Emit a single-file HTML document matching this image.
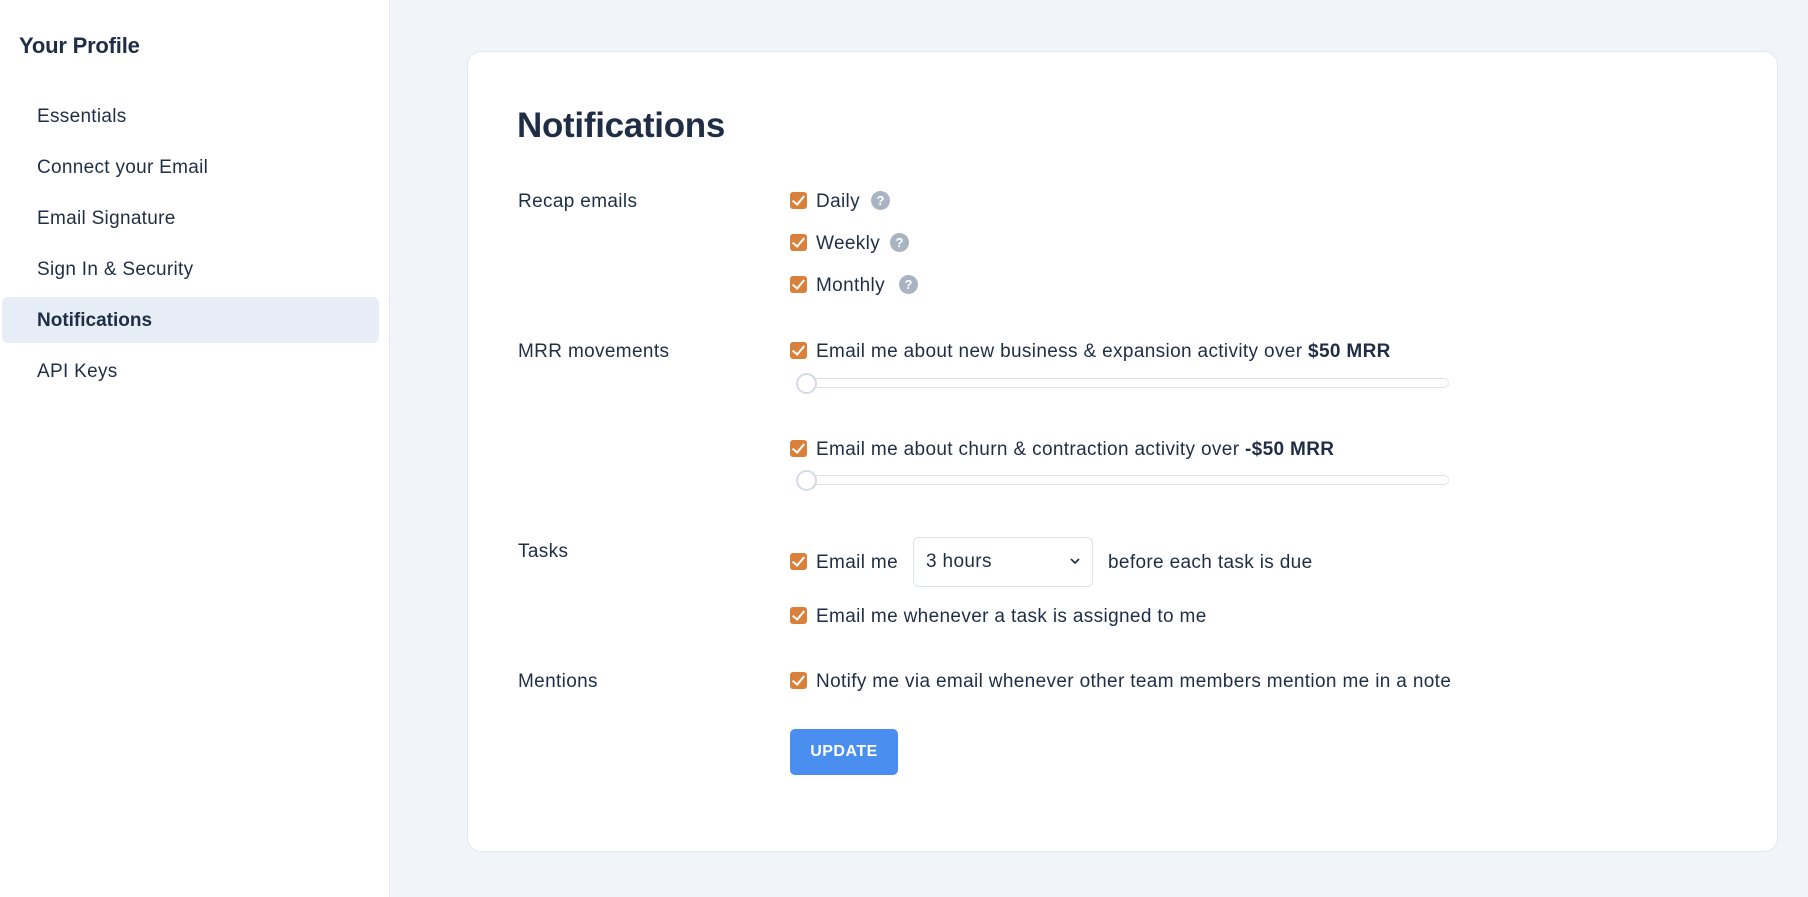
<!DOCTYPE html>
<html><head><meta charset="utf-8"><style>
*{box-sizing:border-box;margin:0;padding:0}
body{width:1808px;height:897px;background:#f1f4f8;font-family:"Liberation Sans",sans-serif;color:#1f2e45;position:relative;overflow:hidden}
.side{position:absolute;left:0;top:0;width:390px;height:897px;background:#fff;border-right:1px solid #e1e7ef}
.abs{position:absolute;white-space:nowrap}
.h{left:19px;top:33px;font-size:22px;font-weight:bold;letter-spacing:-0.2px}
.nav{left:37px;font-size:19px;line-height:22px;letter-spacing:0.3px}
.act{position:absolute;left:2px;top:297px;width:377px;height:46px;background:#e6edf6;border-radius:6px}
.card{position:absolute;left:467px;top:51px;width:1311px;height:801px;background:#fff;border:1px solid #e1e7ef;border-radius:14px}
.t{left:517px;top:106px;font-size:35px;font-weight:bold;letter-spacing:-0.3px}
.lab{left:518px;font-size:19px;line-height:22px;letter-spacing:0.35px}
.cb{position:absolute;left:790px;width:17px;height:17px;background:#d9803a;border-radius:3px}
.cb:after{content:"";position:absolute;left:5px;top:1px;width:5px;height:10px;border:solid #fff;border-width:0 2px 2px 0;transform:rotate(40deg)}
.txt{left:816px;font-size:19px;line-height:22px;letter-spacing:0.35px}
.q{position:absolute;width:19px;height:19px;border-radius:50%;background:#a9b4c2;color:#fff;font-size:13px;font-weight:bold;text-align:center;line-height:19px}
.sl{position:absolute;left:796px;width:653px;height:10px;border:1px solid #dde3ea;border-radius:5px;background:#fff}
.th{position:absolute;left:796px;width:21px;height:21px;border:2px solid #d5dbe4;border-radius:50%;background:#fff}
.sel{position:absolute;left:913px;top:537px;width:180px;height:50px;border:1px solid #dde3ea;border-radius:6px;font-size:19px;letter-spacing:0.35px;padding:13px 0 0 12px}
.btn{position:absolute;left:790px;top:729px;width:108px;height:46px;background:#4a8ff0;border-radius:5px;color:#fff;font-weight:bold;font-size:16px;text-align:center;line-height:46px;letter-spacing:0.5px}
</style></head><body>
<div class="side">
<div class="abs h">Your Profile</div>
<div class="act"></div>
<div class="abs nav" style="top:106px">Essentials</div>
<div class="abs nav" style="top:157px">Connect your Email</div>
<div class="abs nav" style="top:208px">Email Signature</div>
<div class="abs nav" style="top:259px">Sign In &amp; Security</div>
<div class="abs nav" style="top:310px;font-weight:bold;letter-spacing:0">Notifications</div>
<div class="abs nav" style="top:361px">API Keys</div>
</div>
<div class="card"></div>
<div class="abs t">Notifications</div>
<div class="abs lab" style="top:191px">Recap emails</div>
<div class="abs lab" style="top:341px">MRR movements</div>
<div class="abs lab" style="top:541px">Tasks</div>
<div class="abs lab" style="top:671px">Mentions</div>

<div class="cb" style="top:192px"></div><div class="abs txt" style="top:191px">Daily</div><div class="q" style="left:871px;top:191px">?</div>
<div class="cb" style="top:234px"></div><div class="abs txt" style="top:233px">Weekly</div><div class="q" style="left:890px;top:233px">?</div>
<div class="cb" style="top:276px"></div><div class="abs txt" style="top:275px">Monthly</div><div class="q" style="left:899px;top:275px">?</div>

<div class="cb" style="top:342px"></div><div class="abs txt" style="top:341px">Email me about new business &amp; expansion activity over <b>$50 MRR</b></div>
<div class="sl" style="top:378px"></div><div class="th" style="top:373px"></div>
<div class="cb" style="top:440px"></div><div class="abs txt" style="top:439px">Email me about churn &amp; contraction activity over <b>-$50 MRR</b></div>
<div class="sl" style="top:475px"></div><div class="th" style="top:470px"></div>

<div class="cb" style="top:553px"></div><div class="abs txt" style="top:552px">Email me</div>
<div class="sel">3 hours<svg style="position:absolute;right:12px;top:20px" width="10" height="7" viewBox="0 0 10 7"><path d="M1 1l4 4 4-4" fill="none" stroke="#1f2e45" stroke-width="1.6"/></svg></div>
<div class="abs txt" style="left:1108px;top:552px">before each task is due</div>
<div class="cb" style="top:607px"></div><div class="abs txt" style="top:606px">Email me whenever a task is assigned to me</div>
<div class="cb" style="top:672px"></div><div class="abs txt" style="top:671px">Notify me via email whenever other team members mention me in a note</div>
<div class="btn">UPDATE</div>
</body></html>
